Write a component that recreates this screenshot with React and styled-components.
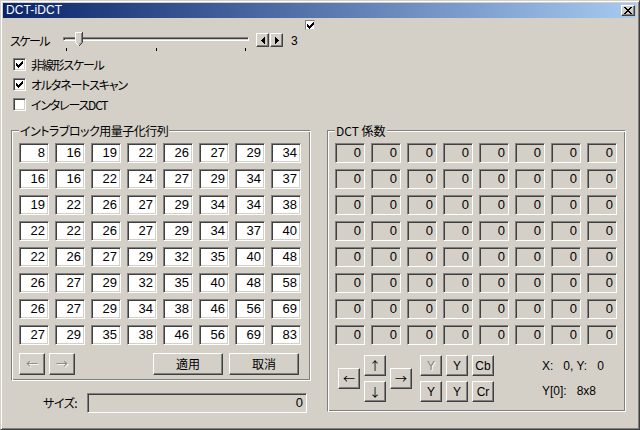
import React from 'react'
import styled, { createGlobalStyle, css } from 'styled-components'

const FACE = '#d4d0c8'
const SHADOW = '#808080'
const DARK = '#404040'

const GlobalStyle = createGlobalStyle`
  html, body {
    margin: 0;
    padding: 0;
    background: ${FACE};
  }
  body {
    font-family: "Noto Sans CJK JP", "Liberation Sans", sans-serif;
    font-size: 12px;
    font-feature-settings: "palt";
    color: #000;
  }
  * {
    box-sizing: border-box;
  }
`

const raised = css`
  background: ${FACE};
  border-top: 1px solid #fff;
  border-left: 1px solid #fff;
  border-right: 1px solid ${DARK};
  border-bottom: 1px solid ${DARK};
  box-shadow: inset -1px -1px ${SHADOW};
`

const sunken = css`
  border-top: 1px solid ${SHADOW};
  border-left: 1px solid ${SHADOW};
  border-right: 1px solid #fff;
  border-bottom: 1px solid #fff;
  box-shadow: inset 1px 1px ${DARK}, inset -1px -1px ${FACE};
`

const Frame = styled.div`
  width: 640px;
  height: 430px;
  background: ${FACE};
  border-top: 1px solid ${FACE};
  border-left: 1px solid ${FACE};
  border-right: 1px solid ${DARK};
  border-bottom: 1px solid ${DARK};
  box-shadow: inset 1px 1px #fff, inset -1px -1px ${SHADOW};
  padding: 2px 3px 2px 2px;
  display: flex;
  flex-direction: column;
  overflow: hidden;
`

const TitleBar = styled.div`
  height: 15px;
  display: flex;
  align-items: center;
  justify-content: space-between;
  padding: 0 1px 0 3px;
  background: linear-gradient(to right, #0a246a, #a6caf0);
`

const TitleText = styled.span`
  color: #fff;
  font-family: "Liberation Sans", sans-serif;
  font-size: 12px;
  line-height: 15px;
  letter-spacing: 0.1px;
`

const CloseBtn = styled.div`
  ${raised};
  width: 14px;
  height: 11px;
  display: flex;
  align-items: center;
  justify-content: center;
`

const Body = styled.div`
  display: flex;
  flex-direction: column;
  padding-left: 7px;
`

const TopCheckRow = styled.div`
  margin-top: 2px;
  height: 10px;
  padding-left: 295px;
  display: flex;
`

const SmallCheck = styled.div`
  width: 10px;
  height: 10px;
  background: #fff;
  border-top: 1px solid ${SHADOW};
  border-left: 1px solid ${SHADOW};
  border-right: 1px solid ${FACE};
  border-bottom: 1px solid ${FACE};
  display: flex;
  align-items: center;
  justify-content: center;
`

const SliderRow = styled.div`
  margin-top: 2px;
  height: 20px;
  display: flex;
  align-items: flex-start;
`

const SliderLabel = styled.span`
  width: 53px;
  margin-top: 2px;
  line-height: 14px;
  letter-spacing: -1.5px;
`

const Slider = styled.div`
  width: 186px;
  display: flex;
  flex-direction: column;
`

const TrackArea = styled.div`
  position: relative;
  height: 15px;
  padding-top: 5px;
`

const Track = styled.div`
  height: 4px;
  ${sunken};
  background: ${FACE};
`

const Thumb = styled.svg`
  position: absolute;
  top: 0;
`

const TickRow = styled.div`
  margin-top: 1px;
  height: 3px;
  padding: 0 3px;
  display: flex;
  justify-content: space-between;
`

const Tick = styled.span`
  width: 1px;
  height: 3px;
  background: #000;
`

const SpinGroup = styled.div`
  margin-left: 7px;
  margin-top: 1px;
  display: flex;
  gap: 1px;
`

const SpinBtn = styled.div`
  ${raised};
  width: 13px;
  height: 14px;
  display: flex;
  align-items: center;
  justify-content: center;
`

const SpinValue = styled.span`
  margin-left: 8px;
  margin-top: 2px;
  font-family: "Liberation Sans", sans-serif;
  font-size: 12px;
  line-height: 14px;
`

const CheckList = styled.div`
  margin-top: 6px;
  padding-left: 3px;
  display: flex;
  flex-direction: column;
  gap: 7px;
`

const CheckRow = styled.div`
  height: 13px;
  display: flex;
  align-items: center;
`

const CheckBox = styled.div`
  width: 13px;
  height: 13px;
  ${sunken};
  background: #fff;
  display: flex;
  align-items: center;
  justify-content: center;
`

const CheckLabel = styled.span`
  margin-left: 5px;
  line-height: 13px;
  letter-spacing: -1.2px;
`

const Columns = styled.div`
  margin-top: 19px;
  margin-left: 1px;
  display: flex;
  gap: 16px;
  align-items: flex-start;
`

const LeftCol = styled.div`
  width: 300px;
  display: flex;
  flex-direction: column;
`

const GroupBox = styled.div`
  position: relative;
  width: ${(p) => p.$w}px;
  height: ${(p) => p.$h}px;
  padding: 12px 0 0 7px;
  border-top: 1px solid ${SHADOW};
  border-left: 1px solid ${SHADOW};
  border-right: 1px solid #fff;
  border-bottom: 1px solid #fff;
  box-shadow: inset 1px 1px #fff, inset -1px -1px ${SHADOW};
  display: flex;
  flex-direction: column;
`

const Legend = styled.span`
  position: absolute;
  top: -7px;
  left: 7px;
  padding: 0 1px;
  line-height: 13px;
  background: ${FACE};
  white-space: nowrap;
  letter-spacing: ${(p) => p.$tight || 0}px;
`

const CellGrid = styled.div`
  display: grid;
  grid-template-columns: repeat(8, 30px);
  grid-auto-rows: 20px;
  gap: 6px;
`

const Cell = styled.div`
  ${sunken};
  background: ${(p) => (p.$readOnly ? FACE : '#fff')};
  text-align: right;
  padding-right: 3px;
  font-family: "Liberation Sans", sans-serif;
  font-size: 13px;
  line-height: 18px;
`

const ButtonRow = styled.div`
  margin-top: 8px;
  padding-right: 11px;
  display: flex;
  justify-content: space-between;
`

const BtnGroup = styled.div`
  display: flex;
  gap: ${(p) => p.$gap}px;
`

const Button = styled.div`
  ${raised};
  width: ${(p) => p.$w}px;
  height: ${(p) => p.$h || 22}px;
  display: flex;
  align-items: center;
  justify-content: center;
  font-size: 12px;
  line-height: 14px;
  font-family: ${(p) =>
    p.$latin
      ? '"Liberation Sans", sans-serif'
      : '"Noto Sans CJK JP", sans-serif'};
  color: ${(p) => (p.$disabled ? SHADOW : '#000')};
  text-shadow: ${(p) => (p.$disabled ? '1px 1px #fff' : 'none')};
`

const SizeRow = styled.div`
  margin-top: 12px;
  display: flex;
  align-items: center;
`

const SizeLabel = styled.span`
  width: 76px;
  padding-right: 10px;
  text-align: right;
  line-height: 14px;
  letter-spacing: -0.5px;
`

const SizeField = styled.div`
  width: 220px;
  height: 20px;
  ${sunken};
  background: ${FACE};
  text-align: right;
  padding-right: 3px;
  font-family: "Liberation Sans", sans-serif;
  font-size: 13px;
  line-height: 18px;
`

const BottomRow = styled.div`
  margin-top: 10px;
  padding-left: 3px;
  display: flex;
  align-items: flex-start;
`

const NavPad = styled.div`
  display: flex;
  align-items: center;
  gap: 4px;
`

const NavCol = styled.div`
  display: flex;
  flex-direction: column;
  gap: 5px;
`

const YGrid = styled.div`
  margin-left: 8px;
  display: grid;
  grid-template-columns: repeat(3, 22px);
  grid-auto-rows: 21px;
  column-gap: 4px;
  row-gap: 5px;
`

const Info = styled.div`
  margin-left: 48px;
  padding-top: 4px;
  display: flex;
  flex-direction: column;
  gap: 11px;
  font-family: "Liberation Sans", sans-serif;
  font-size: 12px;
  line-height: 14px;
  white-space: pre;
`

const quant = [
  [8, 16, 19, 22, 26, 27, 29, 34],
  [16, 16, 22, 24, 27, 29, 34, 37],
  [19, 22, 26, 27, 29, 34, 34, 38],
  [22, 22, 26, 27, 29, 34, 37, 40],
  [22, 26, 27, 29, 32, 35, 40, 48],
  [26, 27, 29, 32, 35, 40, 48, 58],
  [26, 27, 29, 34, 38, 46, 56, 69],
  [27, 29, 35, 38, 46, 56, 69, 83],
]

const checkPath = [0, 1, 2, 3, 4, 5, 6]
  .map((x) => {
    const y = [2, 3, 4, 3, 2, 1, 0][x]
    return `M${x} ${y}h1v3h-1z`
  })
  .join('')

const CheckMark = () => (
  <svg width="7" height="7" viewBox="0 0 7 7" shapeRendering="crispEdges">
    <path d={checkPath} fill="#000" />
  </svg>
)

const CloseGlyph = () => (
  <svg width="8" height="7" viewBox="0 0 8 7" shapeRendering="crispEdges">
    <path
      d="M0 0h2v1h-2zM6 0h2v1h-2zM1 1h2v1h-2zM5 1h2v1h-2zM2 2h4v1h-4zM3 3h2v1h-2zM2 4h4v1h-4zM1 5h2v1h-2zM5 5h2v1h-2zM0 6h2v1h-2zM6 6h2v1h-2z"
      fill="#000"
    />
  </svg>
)

const Tri = ({ dir }) => (
  <svg width="4" height="7" viewBox="0 0 4 7" shapeRendering="crispEdges">
    <path
      d={
        dir === 'left'
          ? 'M3 0h1v7h-1zM2 1h1v5h-1zM1 2h1v3h-1zM0 3h1v1h-1z'
          : 'M0 0h1v7h-1zM1 1h1v5h-1zM2 2h1v3h-1zM3 3h1v1h-1z'
      }
      fill="#000"
    />
  </svg>
)

const ThumbShape = ({ left }) => (
  <Thumb width="8" height="15" viewBox="0 0 8 15" style={{ left }}>
    <polygon points="0.5,0.5 7.5,0.5 7.5,10.5 4,14 0.5,10.5" fill={FACE} />
    <polyline points="0.5,10.5 0.5,0.5 7,0.5" stroke="#fff" fill="none" />
    <polyline points="0.5,10.5 3.5,13.5" stroke="#fff" fill="none" />
    <polyline points="7.5,0 7.5,10.5 4,14" stroke={DARK} fill="none" />
    <polyline points="6.5,1 6.5,10 4,12.5" stroke={SHADOW} fill="none" />
  </Thumb>
)

export default function App() {
  const options = [
    { label: '非線形スケール', checked: true },
    { label: 'オルタネートスキャン', checked: true },
    { label: 'インタレースDCT', checked: false },
  ]

  return (
    <>
      <GlobalStyle />
      <Frame>
        <TitleBar>
          <TitleText>DCT-iDCT</TitleText>
          <CloseBtn>
            <CloseGlyph />
          </CloseBtn>
        </TitleBar>
        <Body>
          <TopCheckRow>
            <SmallCheck>
              <CheckMark />
            </SmallCheck>
          </TopCheckRow>
          <SliderRow>
            <SliderLabel>スケール</SliderLabel>
            <Slider>
              <TrackArea>
                <Track />
                <ThumbShape left={12} />
              </TrackArea>
              <TickRow>
                <Tick />
                <Tick />
                <Tick />
              </TickRow>
            </Slider>
            <SpinGroup>
              <SpinBtn>
                <Tri dir="left" />
              </SpinBtn>
              <SpinBtn>
                <Tri dir="right" />
              </SpinBtn>
            </SpinGroup>
            <SpinValue>3</SpinValue>
          </SliderRow>
          <CheckList>
            {options.map((o) => (
              <CheckRow key={o.label}>
                <CheckBox>{o.checked && <CheckMark />}</CheckBox>
                <CheckLabel>{o.label}</CheckLabel>
              </CheckRow>
            ))}
          </CheckList>
          <Columns>
            <LeftCol>
              <GroupBox $w={300} $h={251}>
                <Legend $tight={-0.5}>イントラブロック用量子化行列</Legend>
                <CellGrid>
                  {quant.flat().map((v, i) => (
                    <Cell key={i}>{v}</Cell>
                  ))}
                </CellGrid>
                <ButtonRow>
                  <BtnGroup $gap={4}>
                    <Button $w={26} $disabled>
                      ←
                    </Button>
                    <Button $w={26} $disabled>
                      →
                    </Button>
                  </BtnGroup>
                  <BtnGroup $gap={6}>
                    <Button $w={70}>適用</Button>
                    <Button $w={70}>取消</Button>
                  </BtnGroup>
                </ButtonRow>
              </GroupBox>
              <SizeRow>
                <SizeLabel>サイズ:</SizeLabel>
                <SizeField>0</SizeField>
              </SizeRow>
            </LeftCol>
            <GroupBox $w={299} $h={282}>
              <Legend>DCT 係数</Legend>
              <CellGrid>
                {Array.from({ length: 64 }).map((_, i) => (
                  <Cell key={i} $readOnly>
                    0
                  </Cell>
                ))}
              </CellGrid>
              <BottomRow>
                <NavPad>
                  <Button $w={22} $h={21}>
                    ←
                  </Button>
                  <NavCol>
                    <Button $w={22} $h={21}>
                      ↑
                    </Button>
                    <Button $w={22} $h={21}>
                      ↓
                    </Button>
                  </NavCol>
                  <Button $w={22} $h={21}>
                    →
                  </Button>
                </NavPad>
                <YGrid>
                  <Button $w={22} $h={21} $latin $disabled>
                    Y
                  </Button>
                  <Button $w={22} $h={21} $latin>
                    Y
                  </Button>
                  <Button $w={22} $h={21} $latin>
                    Cb
                  </Button>
                  <Button $w={22} $h={21} $latin>
                    Y
                  </Button>
                  <Button $w={22} $h={21} $latin>
                    Y
                  </Button>
                  <Button $w={22} $h={21} $latin>
                    Cr
                  </Button>
                </YGrid>
                <Info>
                  <span>{'X:   0, Y:   0'}</span>
                  <span>{'Y[0]:   8x8'}</span>
                </Info>
              </BottomRow>
            </GroupBox>
          </Columns>
        </Body>
      </Frame>
    </>
  )
}
